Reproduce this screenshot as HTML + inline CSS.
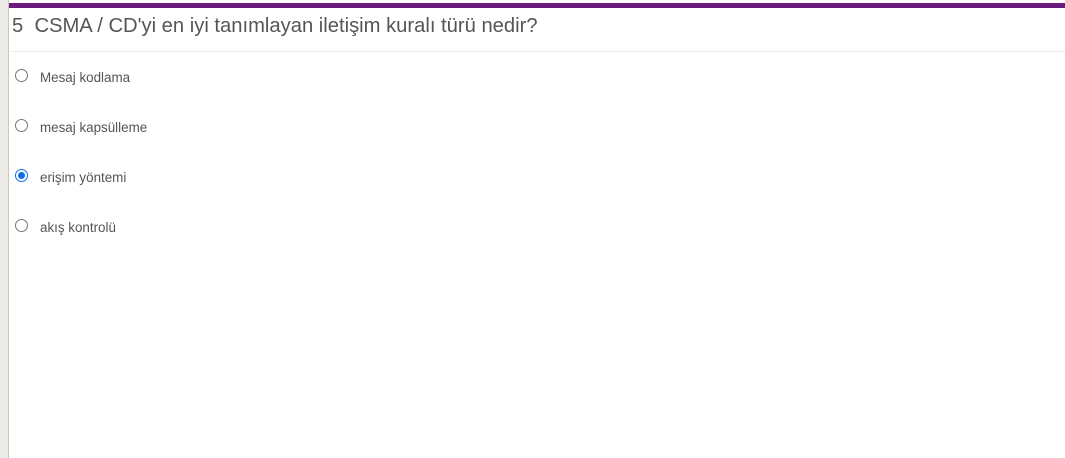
<!DOCTYPE html>
<html><head><meta charset="utf-8"><style>
body{margin:0;width:1065px;height:458px;background:#fff;font-family:"Liberation Sans",Arial,sans-serif;position:relative;overflow:hidden}
.side{position:absolute;left:0;top:0;width:8px;height:458px;background:#ecebe7;border-right:1px solid #c9c7c2}
.bar{position:absolute;left:9px;top:3px;right:0;height:5px;background:#6a1b7e}
h1{position:absolute;left:12px;top:15px;margin:0;font-weight:normal;font-size:20.2px;color:#555}
.line{position:absolute;left:11px;right:0;top:51px;height:1px;background:#e8e8e8}
.opt{position:absolute;left:15px;height:14px;font-size:13.4px;color:#555}
.r{position:absolute;left:0;top:0;width:11px;height:11px;border:1px solid #777;border-radius:50%;background:#fff}
.r.on{border:1px solid #0a6fe8;background:#fff}
.r.on::after{content:"";position:absolute;left:2px;top:2px;width:7px;height:7px;border-radius:50%;background:#0a6fe8}
.opt span{position:absolute;left:25px;top:1px;white-space:nowrap}
</style></head><body>
<div class="side"></div><div class="bar"></div>
<h1>5&nbsp; CSMA / CD'yi en iyi tanımlayan iletişim kuralı türü nedir?</h1>
<div class="line"></div>
<div class="opt" style="top:69px"><div class="r"></div><span>Mesaj kodlama</span></div>
<div class="opt" style="top:119px"><div class="r"></div><span>mesaj kapsülleme</span></div>
<div class="opt" style="top:169px"><div class="r on"></div><span>erişim yöntemi</span></div>
<div class="opt" style="top:219px"><div class="r"></div><span>akış kontrolü</span></div>
</body></html>
